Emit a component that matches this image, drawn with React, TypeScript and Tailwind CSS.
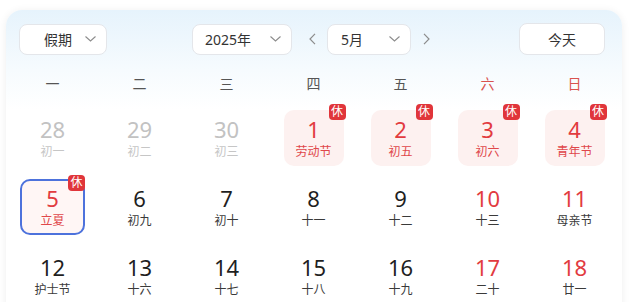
import React from 'react';

type Day = {
    num: number;
    lunar: string;
    kind?: 'past' | 'weekend' | 'holiday';
    rest?: boolean;
    selected?: boolean;
    redLunar?: boolean;
};

const weekdays = ['一', '二', '三', '四', '五', '六', '日'];

const rows: Day[][] = [
    [
        { num: 28, lunar: '初一', kind: 'past' },
        { num: 29, lunar: '初二', kind: 'past' },
        { num: 30, lunar: '初三', kind: 'past' },
        { num: 1, lunar: '劳动节', kind: 'holiday', rest: true, redLunar: true },
        { num: 2, lunar: '初五', kind: 'holiday', rest: true, redLunar: true },
        { num: 3, lunar: '初六', kind: 'holiday', rest: true, redLunar: true },
        { num: 4, lunar: '青年节', kind: 'holiday', rest: true, redLunar: true },
    ],
    [
        { num: 5, lunar: '立夏', kind: 'weekend', rest: true, selected: true, redLunar: true },
        { num: 6, lunar: '初九' },
        { num: 7, lunar: '初十' },
        { num: 8, lunar: '十一' },
        { num: 9, lunar: '十二' },
        { num: 10, lunar: '十三', kind: 'weekend' },
        { num: 11, lunar: '母亲节', kind: 'weekend' },
    ],
    [
        { num: 12, lunar: '护士节' },
        { num: 13, lunar: '十六' },
        { num: 14, lunar: '十七' },
        { num: 15, lunar: '十八' },
        { num: 16, lunar: '十九' },
        { num: 17, lunar: '二十', kind: 'weekend' },
        { num: 18, lunar: '廿一', kind: 'weekend' },
    ],
];

const ChevronDown = () => (
    <svg width="11" height="6" viewBox="0 0 11 6" fill="none">
        <path d="M0.5 0.5L5.5 5L10.5 0.5" stroke="#8c8c8c" strokeWidth="1.1" />
    </svg>
);

const ChevronSide = ({ dir }: { dir: 'left' | 'right' }) => (
    <svg width="7" height="12" viewBox="0 0 7 12" fill="none">
        <path
            d={dir === 'left' ? 'M6 0.8L1 6L6 11.2' : 'M1 0.8L6 6L1 11.2'}
            stroke="#8c8c8c"
            strokeWidth="1.2"
        />
    </svg>
);

const Select = ({ label, width, textPad }: { label: string; width: string; textPad: string }) => (
    <div
        className={`flex h-[31px] items-center justify-between rounded-[8px] border border-[#e4e6ea] bg-white pr-[10px] ${width} ${textPad}`}
    >
        <span className="text-[14px] text-[#333]">{label}</span>
        <ChevronDown />
    </div>
);

const DayCell = ({ d }: { d: Day }) => {
    const numColor =
        d.kind === 'past'
            ? 'text-[#c2c2c2]'
            : d.kind === 'holiday' || d.kind === 'weekend'
              ? 'text-[#e23b3f]'
              : 'text-[#1f1f1f]';
    const lunarColor =
        d.kind === 'past' ? 'text-[#c6c6c6]' : d.redLunar ? 'text-[#e0474a]' : 'text-[#3a3a3a]';
    const box = d.selected
        ? 'border-2 border-[#4d72dc] bg-[#fff6f5] w-[65px]'
        : d.kind === 'holiday'
          ? 'bg-[#fdf1f0] w-[60px]'
          : 'w-[62px]';

    return (
        <div className="flex justify-center">
            <div
                className={`relative flex h-[56px] flex-col items-center justify-center rounded-[10px] ${box}`}
            >
                <span className={`text-[22px] leading-[22px] ${numColor}`}>{d.num}</span>
                <span className={`mt-[4px] text-[12px] leading-[15px] ${lunarColor}`}>{d.lunar}</span>
                {d.rest && (
                    <span className="absolute right-[-2px] top-[-6px] flex h-[16px] w-[17px] items-center justify-center rounded-[4px] bg-[#e0353a] text-[12px] leading-none text-white">
                        休
                    </span>
                )}
            </div>
        </div>
    );
};

export default function App() {
    return (
        <div
            className="h-[302px] overflow-hidden bg-white pl-[6px] pt-[10px]"
            style={{ fontFamily: '"Noto Sans", "Noto Sans CJK SC", sans-serif' }}
        >
            <div className="h-[320px] w-[616px] rounded-[16px] bg-[linear-gradient(180deg,#e6f3fc_0px,#f6fbfe_60px,#ffffff_100px)] pl-[3px] pr-[4px] pt-[13px] shadow-[0_1px_8px_rgba(0,0,0,0.07)]">
                {/* Toolbar */}
                <div className="flex items-center pl-[10px] pr-[13px]">
                    <Select label="假期" width="w-[88px]" textPad="pl-[24px]" />
                    <div className="ml-[85px] flex items-center">
                        <Select label="2025年" width="w-[100px]" textPad="pl-[12px]" />
                        <div className="ml-[17px] mr-[11px] flex items-center">
                            <ChevronSide dir="left" />
                        </div>
                        <Select label="5月" width="w-[84px]" textPad="pl-[13px]" />
                        <div className="ml-[12px] flex items-center">
                            <ChevronSide dir="right" />
                        </div>
                    </div>
                    <button className="ml-auto flex h-[32px] w-[86px] items-center justify-center rounded-[8px] border border-[#e4e6ea] bg-white text-[14px] text-[#333]">
                        今天
                    </button>
                </div>

                {/* Weekday header */}
                <div className="mt-[13px] grid h-[30px] grid-cols-7 items-center">
                    {weekdays.map((w, i) => (
                        <div
                            key={w}
                            className={`text-center text-[14px] ${i >= 5 ? 'text-[#d9534f]' : 'text-[#555]'}`}
                        >
                            {w}
                        </div>
                    ))}
                </div>

                {/* Days */}
                <div className="mt-[12px] grid grid-cols-7 gap-y-[13px]">
                    {rows.flat().map((d) => (
                        <DayCell key={`${d.kind}-${d.num}`} d={d} />
                    ))}
                </div>
            </div>
        </div>
    );
}
